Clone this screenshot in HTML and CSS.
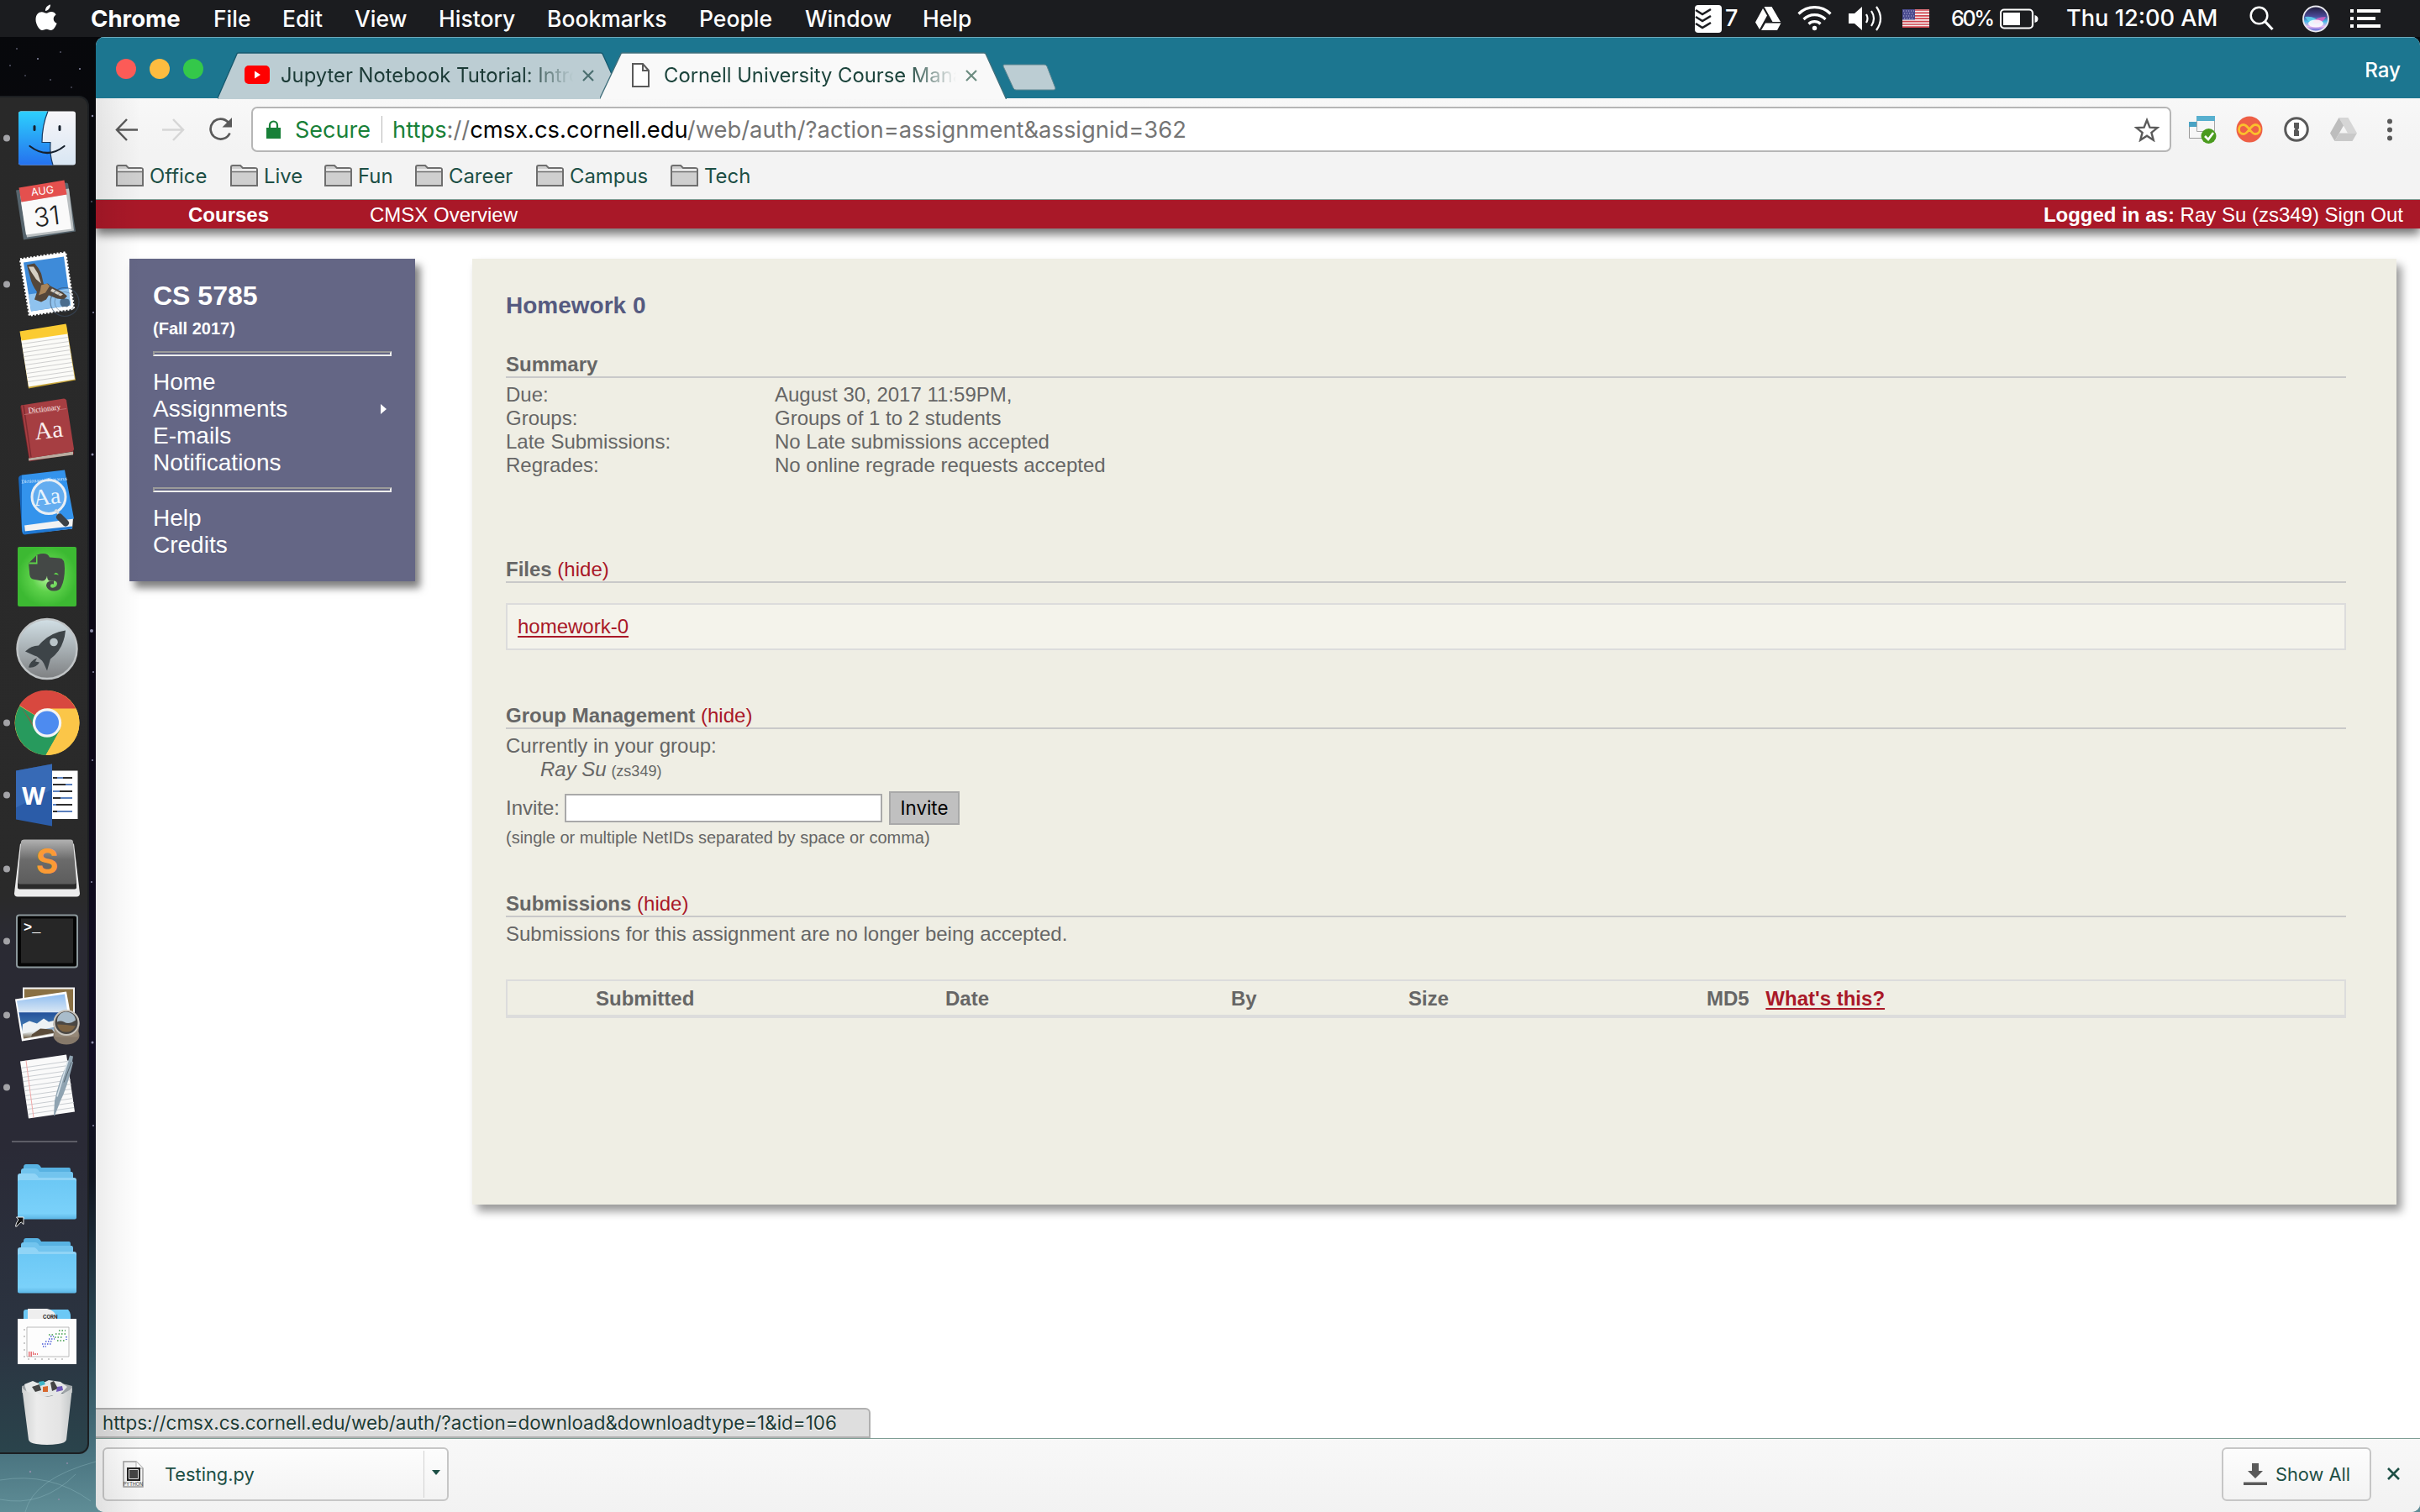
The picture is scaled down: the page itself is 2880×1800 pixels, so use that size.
FILE: index.html
```html
<!DOCTYPE html>
<html lang="en">
<head>
<meta charset="utf-8">
<title>Cornell University Course Management System</title>
<link rel="stylesheet" href="styles.css">
</head>
<body>
<div class="desktop">
  <header class="menubar">
    <nav class="menus">
      <span class="apple"><svg width="28" height="34" viewBox="0 0 28 34"><path fill="#fff" d="M19 0.500c.3 3.500-2.700 7.300-6 7.400C12.600 4.500 15.700 1 19 .5zM25.600 12.400c-4.300 2.700-3.600 8.500 1 10.300-1.300 3.700-4 8.300-7 8.300-2.100 0-2.700-1.300-5.200-1.300S11 31 9.100 31C5.700 31 1.500 23.700 1.500 18.200c0-5.700 3.500-8.900 7.200-8.900 2.300 0 3.900 1.500 5.500 1.500s3.300-1.700 6.200-1.700c1.700 0 3.900 1 5.200 3.300z"/></svg></span>
      <b>Chrome</b><span>File</span><span>Edit</span><span>View</span><span>History</span><span>Bookmarks</span><span>People</span><span>Window</span><span>Help</span>
    </nav>
    <div class="status">
      <svg width="32" height="33" viewBox="0 0 32 33"><rect width="32" height="33" rx="4" fill="#fff"/><path d="M1 6l8 5 10-6M1 14l8 5 10-6M1 22l8 5 10-6" fill="none" stroke="#1b1c20" stroke-width="2.600"/></svg>
      <span class="count">7</span>
      <svg width="31" height="29" viewBox="0 0 31 29" fill="#fff"><path d="M10.500 0h9L30 18h-9.500zM9 2l5 8.500L5 27 0 18.500zM12 19.500h18.500L26 28H7z"/></svg>
      <svg width="41" height="30" viewBox="0 0 41 30" fill="none" stroke="#fff" stroke-width="3.200"><path d="M1.500 9.500a27 27 0 0 1 38 0M7.500 16a18.500 18.500 0 0 1 26 0M13.500 21.500a10 10 0 0 1 14 0"/><circle cx="20.500" cy="26.500" r="2" fill="#fff" stroke-width="1.500"/></svg>
      <svg width="42" height="32" viewBox="0 0 42 32" fill="none" stroke="#fff" stroke-width="2.200"><path fill="#fff" stroke="none" d="M0 10h7l9-8v28l-9-8H0z"/><path d="M21 11q3 5 0 10M27 7q6 9 0 18M33 2q10 14 0 28"/></svg>
      <svg width="32" height="22" viewBox="0 0 32 22"><path fill="#f4f0f0" d="M0 0h32v22H0z"/><path stroke="#d0434d" stroke-width="1.700" d="M0 1h32M0 4.400h32M0 7.800h32M0 11.200h32M0 14.600h32M0 18h32M0 21.200h32"/><path fill="#4a4b8e" d="M0 0h15v12.500H0z"/><path stroke="#b9b9dc" stroke-width="1.200" stroke-dasharray="1.200 1.800" d="M1 2h13M2 5h12M1 8h13M2 11h12"/></svg>
      <span class="pct">60%</span>
      <svg width="46" height="25" viewBox="0 0 46 25"><rect x="1" y="1.500" width="38" height="22" rx="4" fill="none" stroke="#fff" stroke-width="2.200"/><path fill="#fff" d="M4 5h20v15H4zM41.500 8q4 1 4 4.500t-4 4.500z"/></svg>
      <span class="clock">Thu 12:00 AM</span>
      <svg width="29" height="30" viewBox="0 0 29 30" fill="none" stroke="#fff" stroke-width="2.500"><circle cx="11.500" cy="11.500" r="9.800"/><path stroke-width="3.200" d="M18.500 18.500L27.500 28"/></svg>
      <svg width="32" height="33" viewBox="0 0 32 33"><defs><linearGradient id="siri" x1="0" y1="0" x2="0" y2="1"><stop offset="0" stop-color="#1f1b38"/><stop offset=".4" stop-color="#4a4a98"/><stop offset=".6" stop-color="#49b9e8"/><stop offset=".8" stop-color="#e9b7f0"/><stop offset="1" stop-color="#3a5ad0"/></linearGradient></defs><circle cx="16" cy="16.500" r="15" fill="url(#siri)" stroke="#e8e8ee" stroke-width="1.800"/><path fill="#5fd9f2" opacity=".8" d="M3 14q12-2 18 8-12 2-18-8z"/><path fill="#e85ac0" opacity=".8" d="M28 14q-12 0-16 7 10 4 16-7z"/><ellipse cx="16" cy="22" rx="9" ry="4.500" fill="#fff" opacity=".85"/></svg>
      <svg width="36" height="22" viewBox="0 0 36 22"><path stroke="#fff" stroke-width="3.800" d="M0 2h4M8 2h28M0 11h4M8 11h22M0 20h4M8 20h28"/></svg>
    </div>
  </header>

  <div class="workspace">
    <svg class="stars" width="114" height="1756" viewBox="0 44 114 1756">
      <g fill="#8d8da8"><circle cx="20" cy="58" r=".8"/><circle cx="45" cy="70" r="1"/><circle cx="72" cy="62" r=".8"/><circle cx="60" cy="95" r=".8"/><circle cx="95" cy="82" r="1"/><circle cx="30" cy="90" r=".7"/><circle cx="85" cy="104" r=".7"/><circle cx="12" cy="78" r=".8"/><circle cx="110" cy="138" r="1.200"/><circle cx="109" cy="240" r=".8"/><circle cx="111" cy="372" r="1"/><circle cx="110" cy="541" r="1.500"/><circle cx="109" cy="751" r="2"/><circle cx="111" cy="800" r="1"/><circle cx="110" cy="905" r="1"/><circle cx="109" cy="1050" r="1"/><circle cx="110" cy="1241" r="1.500"/><circle cx="111" cy="1340" r="1"/><circle cx="36" cy="1752" r="1.200"/><circle cx="80" cy="1742" r="1"/><circle cx="70" cy="1785" r="1"/></g>
      <g fill="none" stroke="#9cc7cb" opacity=".35"><path d="M0 1762q60-10 108 25M30 1800q10-40 84-60M0 1785q50 10 90-30"/></g>
    </svg>
    <aside class="dock">
      <svg viewBox="0 120.500 106 87">
        <defs><linearGradient id="fb" x1="0" y1="0" x2="0" y2="1"><stop offset="0" stop-color="#2dd0fd"/><stop offset="1" stop-color="#2571ee"/></linearGradient><linearGradient id="fw" x1="0" y1="0" x2="0" y2="1"><stop offset="0" stop-color="#f7f6f9"/><stop offset="1" stop-color="#d9e6f3"/></linearGradient></defs>
        <circle class="dot" cx="8" cy="164" r="4"/>
        <rect x="22" y="132" width="68" height="64" rx="3" fill="url(#fw)"/><path fill="url(#fb)" d="M25 132h32q-7 17-7 37h10q-1 15 3 27H25q-3 0-3-3v-58q0-3 3-3z"/><path fill="none" stroke="#1a3b60" stroke-width="1.200" d="M57 132q-7 17-7 37h10q-1 15 3 27"/><path fill="none" stroke="#16202c" stroke-width="2.200" stroke-linecap="round" d="M35.500 173.500q21 16 41 0"/><path stroke="#16202c" stroke-width="3" stroke-linecap="round" d="M41 150v4M71 150v4"/>
      </svg>
      <svg viewBox="0 207.500 106 87">
        <path fill="#56646d" d="M19 226l60-9 2 1 9 57-62 10z"/><path fill="#b9bec0" d="M24 232l58-8 6 50-56 8z"/><path fill="#fafafa" d="M25 240l54-9 6 41-54 7z"/><path fill="#e4504e" d="M22.500 223l54-9 3 17-54 9z"/>
        <text x="51" y="231" font-size="12.500" fill="#fff" text-anchor="middle" transform="rotate(-7 51 231)">AUG</text><text x="57" y="268" font-size="31" font-weight="300" fill="#222" text-anchor="middle" transform="rotate(-7 57 268)">31</text>
      </svg>
      <svg viewBox="0 294.500 106 87">
        <circle class="dot" cx="8" cy="338" r="4"/>
        <path fill="#fff" stroke="#fff" stroke-width="2.500" stroke-dasharray="2 2" d="M24 308l54-8 10 67-53 8z"/><path fill="#3e8bd9" d="M28 312l48-7 8 58-47 7z"/><path fill="#8fc2ee" d="M34 350l48-7 2 20-47 7z"/>
        <path fill="#54463a" d="M32 315l9-2q5 5 8 12l3 13 5-1 3 3 14 7 6 5-4 4-8-1-10-4-3 5-6 3-8-3 3-9q-6-8-8-17z"/><path fill="#d6cfc4" d="M34 317l6 0 5 8 4 12-6-5-6-9zM62 343l13 7-3 2-12-6z"/><path fill="#a8845a" d="M49 339l7-2 3 3-5 8-8 3 2-6z"/><circle cx="77" cy="359" r="17" fill="none" stroke="#3c4f66" stroke-width="1.200" opacity=".6"/><circle cx="77" cy="359" r="12" fill="none" stroke="#3c4f66" opacity=".4"/><path fill="#3a5876" opacity=".8" d="M72 356q5-2 10 0 3 6-2 9-3-1-6 0-4-4-2-9zM77 354l3-3"/>
      </svg>
      <svg viewBox="0 381.500 106 87">
        <path fill="#c8a63a" d="M24 395l55-9 11 66-56 10z"/><path fill="#fbfbf8" d="M25 403l55-8 9 56-55 9z"/><path fill="#fbcb32" d="M23.500 394l55-9 2 12-55 8z"/><path fill="none" stroke="#c9c9c9" stroke-width=".9" d="M26 409l55-8M27 414l55-8M28 419l55-8M29 424l55-8M30 429l55-8M30 434l55-8M31 439l55-8M32 444l55-8M33 449l55-8M33 454l55-8"/>
      </svg>
      <svg viewBox="0 468.500 106 87">
        <path fill="#6e2429" d="M24 483l3-1 9 62 52-7v3l-53 9z"/><path fill="#b9aca0" d="M34 545l53-8v4l-53 7z"/><path fill="#a63e42" d="M25 482l51-8q2 0 3 2l9 58q0 2-2 3l-51 8z"/><path stroke="#7d2b30" stroke-width="1.500" d="M28 482l9 62"/><path stroke="#cf8a8c" stroke-width=".6" d="M29 493l50-7"/>
        <g fill="#fbeeee" font-family="Liberation Serif, serif" text-anchor="middle"><text x="53" y="489" font-size="9" transform="rotate(-7 53 489)">Dictionary</text><text x="59" y="521" font-size="29" transform="rotate(-7 59 521)">Aa</text></g>
      </svg>
      <svg viewBox="0 555.500 106 87">
        <path fill="#1667bd" d="M22 569q0-3 4-4l7 50-4 21q-3-1-3-6z"/><path fill="#f2f2f2" d="M29 624l58-8-1 13-56 6z"/><path fill="#3393ec" d="M26 565l51-6 11 58-59 8-1 11q-2-4-2-9z"/><path fill="#1f78d4" d="M29 632l57-6v3l-57 7z"/>
        <g fill="#fff" font-family="Liberation Serif, serif" text-anchor="middle"><text x="53" y="573" font-size="6" opacity=".8" transform="rotate(-4 53 573)">Dictionary / Thesaurus</text><text x="57" y="600" font-size="28" transform="rotate(-7 57 600)">Aa</text></g>
        <circle cx="58" cy="591" r="20" fill="#bfe0fa" fill-opacity=".35" stroke="#e8eef4" stroke-width="3"/><path stroke="#d5dade" stroke-width="3" d="M66 606l4 6"/><path stroke="#3c4146" stroke-width="8" stroke-linecap="round" d="M71 615l7 7"/>
      </svg>
      <svg viewBox="0 642.500 106 87">
        <defs><radialGradient id="ev"><stop offset="0" stop-color="#b8f5a0"/><stop offset=".5" stop-color="#5ed24b"/><stop offset="1" stop-color="#3cb932"/></radialGradient></defs>
        <rect x="21" y="650.500" width="70" height="71" rx="2" fill="url(#ev)"/><path fill="#444846" d="M34 670l10-10q12-4 15 3l12 1q6 0 6 12 0 14-4 22-2 5-9 5t-9-6q0-7 9-6v4q-4-1-4 2t4 2q4-1 4-5-1-4-8-3-4 0-4-6-1 6-6 6l-11-2q-4-1-4-9z"/><path fill="#5ed24b" d="M35 669h8v-8l1.500-1v11H34zM64 683q3-4 6 1z"/>
      </svg>
      <svg viewBox="0 729.500 106 87">
        <defs><linearGradient id="lp" x1="0" y1="0" x2="0" y2="1"><stop offset="0" stop-color="#d2e0e6"/><stop offset="1" stop-color="#7e8082"/></linearGradient></defs>
        <circle cx="56" cy="772" r="35.500" fill="url(#lp)" stroke="#c0c4c6" stroke-width="2.500"/><path fill="#3d4448" d="M78 750q-2 22-18 34l-4 14-4-9-2-3-6-5-3-1-11-5q7-7 16-7 12-15 32-18zM44 783l-2 4 5 1q-4 7-13 6 2-8 10-11z"/><circle cx="64" cy="764" r="4.800" fill="#b9c4c9"/>
      </svg>
      <svg viewBox="0 816.500 106 87">
        <circle class="dot" cx="8" cy="860" r="4"/>
        <circle cx="56" cy="860" r="38.500" fill="#fbc648"/><path fill="#d8483f" d="M56 860l-33-21a38.500 38.500 0 0 1 67 4z"/><path fill="#279a5d" d="M56 860L23.500 840a38.500 38.500 0 0 0 31 58.500L72 868z"/><path fill="#fbc648" d="M56 843h34.500A38.500 38.500 0 0 1 54.500 898.500L71 869z"/><path fill="#c43d36" opacity=".55" d="M25 841l17 28-5-12z"/><circle cx="56" cy="860" r="17.200" fill="#f4f4f4"/><circle cx="56" cy="860" r="14" fill="#4d8bf0"/>
      </svg>
      <svg viewBox="0 903.500 106 87">
        <circle class="dot" cx="8" cy="946" r="4"/>
        <path fill="#fff" d="M60 917h32.500v57.500H60z"/><path stroke="#2e2e2e" stroke-width="2" d="M63 925.500h23M63 933.500h23M63 941.500h23M63 949.500h23M63 957.500h23M63 965.500h23"/><path stroke="#5a80bd" stroke-width="2" d="M68 925.500h7M78 933.500h8M63 941.500h8M72 949.500h14M63 957.500h4M68 965.500h18"/><path fill="#2b5ca8" d="M19 917l43-8v74l-43-8z"/><path fill="#3f73bf" opacity=".6" d="M19 917l43-8v30l-43 22z"/><text x="40" y="957" text-anchor="middle" font-size="28" font-weight="700" fill="#fff">W</text>
      </svg>
      <svg viewBox="0 990.500 106 87">
        <defs><linearGradient id="su" x1="0" y1="0" x2="0" y2="1"><stop offset="0" stop-color="#b2b2b2"/><stop offset=".45" stop-color="#6b6b6b"/><stop offset="1" stop-color="#5d5d5d"/></linearGradient></defs>
        <circle class="dot" cx="8" cy="1034" r="4"/>
        <path fill="#ececec" d="M24 1004h64l7 59q0 4-4 4H21q-4 0-4-4z"/><path fill="#2b2b2b" d="M21 1048h70v8q0 2-3 2H24q-3 0-3-2z"/><path fill="url(#su)" d="M29 999h55q3 0 3 3l4 47q0 3-3 3H24q-3 0-3-3l4-47q0-3 4-3z"/><text x="56" y="1039" text-anchor="middle" font-size="41" font-weight="700" fill="#fb9a35">S</text>
      </svg>
      <svg viewBox="0 1077.500 106 87">
        <circle class="dot" cx="8" cy="1120" r="4"/>
        <rect x="20" y="1089" width="72" height="62" rx="3" fill="#050505" stroke="#8c989c" stroke-width="2"/><path fill="#262626" d="M25 1093h62v53H25z"/><text x="28" y="1108" font-size="17" font-weight="700" fill="#fff" font-family="Liberation Mono, monospace">&gt;_</text>
      </svg>
      <svg viewBox="0 1164.500 106 87">
        <defs><linearGradient id="sea" x1="0" y1="0" x2="0" y2="1"><stop offset="0" stop-color="#8fbdf0"/><stop offset=".4" stop-color="#d7e6f4"/><stop offset=".42" stop-color="#24529a"/><stop offset=".7" stop-color="#3f76b0"/><stop offset=".85" stop-color="#e2e8ea"/><stop offset="1" stop-color="#6b5a40"/></linearGradient></defs>
        <circle class="dot" cx="8" cy="1208" r="4"/>
        <path fill="#f5f5f5" d="M27 1175h62v46H27z"/><path fill="#8a7043" d="M29 1177h58v42H29z"/><path fill="#fff" d="M18 1189l61-9 9 49-62 10z"/><path fill="url(#sea)" d="M20 1191l57-8 7 44-56 9z"/><path fill="#eef2f4" d="M27 1219l8-4 9 3 8-6 6 4 8-2v8l-39 8z"/><path fill="#5b4c3a" d="M38 1231l10-7 14 1 3 4-28 5z"/><ellipse cx="79" cy="1232" rx="15.500" ry="11" fill="#86796a"/><circle cx="79" cy="1218" r="15.500" fill="#b9b4ad"/><path fill="#958878" d="M63.500 1218h31l-2 16h-27z"/><circle cx="79" cy="1217" r="14.500" fill="#4a4744" stroke="#c9c5be" stroke-width="2"/><path fill="#a9bccb" d="M68 1216a11 11 0 0 1 22-2q-8 6-14 2-4-2-8 0z"/><path fill="#7c6242" d="M68 1219q10 0 22 2-5 8-12 7-8 0-10-9z"/>
      </svg>
      <svg viewBox="0 1251.500 106 87">
        <circle class="dot" cx="8" cy="1294" r="4"/>
        <path fill="#fafafa" d="M24 1263l55-8 10 68-55 8z"/><path fill="none" stroke="#c3c7cc" stroke-width=".9" d="M25 1271l55-8M26 1276l55-8M27 1282l55-8M28 1287l55-8M29 1293l55-8M30 1298l55-8M30 1304l55-8M31 1309l55-8M32 1315l55-8M33 1320l55-8M33 1326l55-8"/><path stroke="#f0a9a9" d="M31 1262l9 68"/><path fill="#8fa3b1" d="M83 1256l4 1-1 6 1 1q-7 30-15 46l-7 18-1-1 1-17q5-24 15-44z"/><path stroke="#d7e2ea" stroke-width="1.500" d="M81 1262l-13 43"/><path stroke="#56646f" d="M85 1264l-9 24"/>
      </svg>
      <div class="separator"></div>
      <svg viewBox="0 1376 106 87">
        <defs><linearGradient id="fo" x1="0" y1="0" x2="0" y2="1"><stop offset="0" stop-color="#6cc8f5"/><stop offset=".85" stop-color="#7ad1fa"/><stop offset="1" stop-color="#5bb5e4"/></linearGradient></defs>
        <g id="folder"><path fill="#58b2e2" d="M28 1390q0-4 3-4h13q3 0 5 4h33q2 0 2 3v10H28z"/><path fill="#72c4ee" d="M25 1394q0-3 3-3h14q3 0 5 4h38q2 0 2 3v10H25z"/><path fill="#90d4f6" d="M21 1400q0-3 3-3h16q3 0 6 5h42q3 0 3 3v20H21z"/><rect x="21" y="1405" width="70" height="46.500" rx="2" fill="url(#fo)"/></g>
        <path fill="#111" stroke="#f2f2f2" stroke-width="1" d="M19.500 1449h8.500v8.500l-2.800-2.600q-3 2-5.200 5.100h-1.500q.3-4 3.500-8z"/>
      </svg>
      <svg viewBox="0 1463 106 87"><use href="#folder" transform="translate(0 88)"/></svg>
      <svg viewBox="0 1550 106 87">
        <path fill="#6cc8f5" d="M28 1562q0-3 3-3h50q3 3 3 8v6H28z"/><path fill="#eee" d="M33 1558h23q9 1 13 13H33z"/><text x="51" y="1570" font-size="6" font-weight="700" fill="#222">CORN</text>
        <path fill="#fdfdfd" d="M21 1570h70v54H21z"/><path fill="none" stroke="#aaa" stroke-width=".8" d="M32 1580h50v35H32z"/><path stroke="#e0444a" stroke-width="1.500" stroke-dasharray="1.500 1" d="M34 1610h6M34 1612h11M34 1614h5"/><path stroke="#4a5ad8" stroke-width="1.500" stroke-dasharray="1.500 1.500" d="M50 1600h6M51 1603h4M54 1597h8M56 1600h5M58 1594h7M60 1591h4M79 1591v4"/><path stroke="#3c9a48" stroke-width="1.500" stroke-dasharray="1.500 2" d="M58 1589h5M65 1592h9M66 1588h14M68 1596h9M70 1584h8"/><path stroke="#999" stroke-dasharray="2 6" d="M33 1618h48M29 1582v34"/>
      </svg>
      <svg viewBox="0 1637 106 87">
        <defs><linearGradient id="tr"><stop offset="0" stop-color="#d0d2d2"/><stop offset=".3" stop-color="#ececec"/><stop offset=".75" stop-color="#e4e4e4"/><stop offset="1" stop-color="#c4c8c9"/></linearGradient></defs>
        <path fill="#9da3a6" d="M26 1650q30-9 60 0v8H26z"/><path fill="#e4e6e6" d="M29 1648l10-4 9 4 10-5 14 2 8 6-8 9-20 3-20-5z"/><path fill="#444" d="M38 1651l9-3 2 7-7 2zM60 1646l4-2 5 9-7 3z"/><path fill="#3fb6c9" d="M46 1645l6-1 2 4-6 2z"/><path fill="#d8682e" d="M51 1651l6-1v7h-6z"/><path fill="#6e57b8" d="M68 1651l6-1 1 5-8 2z"/>
        <path fill="url(#tr)" d="M26 1651q4 8 18 7 10 8 22 2 14-1 20-8l-7 62q-1 4-10 5-13 2-26 0-8-1-9-5z"/>
      </svg>
    </aside>

    <main class="window">
      <div class="titlebar">
        <div class="lights"><i class="red"></i><i class="yellow"></i><i class="green"></i></div>
        <div class="tab back">
          <svg class="shape" width="482" height="56" viewBox="0 0 482 56"><path fill="#bccdd3" stroke="#175a6f" stroke-width="1.300" d="M-1 57L23 2q0-1 2-1h431q1 0 2 1l25 55"/></svg>
          <svg class="yt" width="30" height="23" viewBox="0 0 30 23"><rect width="30" height="22" rx="5" fill="#f00"/><path fill="#fff" d="M12 6.500l7 4.500-7 4.500z"/></svg>
          <span class="title">Jupyter Notebook Tutorial: Introduction</span>
          <svg width="14" height="14" viewBox="0 0 14 14"><path stroke="#4c6f70" stroke-width="2.200" d="M1 1l12 12M13 1L1 13"/></svg>
        </div>
        <div class="tab front">
          <svg class="shape" width="484" height="56" viewBox="0 0 484 56"><path fill="#f9f9f9" stroke="#42707c" stroke-width="1.300" d="M-1 57L25 2q0-1 2-1h430q1 0 2 1l25 55"/></svg>
          <svg class="doc" width="21" height="29" viewBox="0 0 21 29" fill="#fff" stroke="#5a5a5a" stroke-width="2"><path d="M1 1h12l7 8v19H1zM13 1v8h7"/></svg>
          <span class="title">Cornell University Course Management</span>
          <svg width="14" height="14" viewBox="0 0 14 14"><path stroke="#6c8c80" stroke-width="2.200" d="M1 1l12 12M13 1L1 13"/></svg>
        </div>
        <svg class="newtab" width="64" height="32" viewBox="0 0 64 32"><path fill="#bccdd3" stroke="#5d8590" stroke-width="1" d="M2 1h48q2 0 3 2l10 26q0 2-2 2H16q-2 0-3-2L1 3Q.5 1 2 1z"/></svg>
        <span class="profile">Ray</span>
      </div>

      <div class="toolbar">
        <svg class="backbtn" width="27" height="27" viewBox="0 0 27 27" fill="none" stroke="#5a5a5a" stroke-width="2.500"><path d="M14 1L2 13.500 14 26M2 13.500h25"/></svg>
        <svg class="fwd" width="27" height="27" viewBox="0 0 27 27" fill="none" stroke="#d6d6d6" stroke-width="2.500"><path d="M13 1l12 12.500L13 26M25 13.500H0"/></svg>
        <svg class="reload" width="28" height="28" viewBox="0 0 28 28"><path fill="none" stroke="#5a5a5a" stroke-width="2.700" d="M24.500 18.500A12 12 0 1 1 22.500 5.500"/><path fill="#5a5a5a" d="M27 0v11.500h-11.500z"/></svg>
        <div class="omnibox">
          <svg width="17" height="23" viewBox="0 0 17 23"><path fill="#188038" d="M0 9h17v13H0z"/><path fill="none" stroke="#188038" stroke-width="2.200" d="M4 10V6a4.500 4.500 0 0 1 9 0v4"/></svg>
          <span class="secure">Secure</span><i class="bar"></i>
          <span class="url"><em>https</em>://<b>cmsx.cs.cornell.edu</b>/web/auth/?action=assignment&amp;assignid=362</span>
          <svg class="star" width="30" height="29" viewBox="0 0 30 29"><path fill="none" stroke="#5a5a5a" stroke-width="2.400" d="M15 3l3.400 8.600 9.100.5-7.100 5.800 2.400 8.900-7.800-5-7.800 5 2.400-8.900-7.100-5.800 9.100-.5z"/></svg>
        </div>
        <div class="exts">
          <svg width="33" height="33" viewBox="0 0 33 33"><path fill="#f7f7f7" stroke="#9a9a9a" d="M.5 7.500h20v19H.5z"/><path fill="#4aa3c4" d="M0 7h21v6H0z"/><path fill="#f7f7f7" stroke="#a5a5a5" d="M9.500.5h21v18h-21z"/><path fill="#58b0cf" d="M9 0h22v6H9z"/><circle cx="23.500" cy="24" r="9" fill="#4b9b1f"/><path fill="none" stroke="#fff" stroke-width="2.600" d="M19 24l4 4 6-8"/></svg>
          <svg width="32" height="32" viewBox="0 0 32 32"><circle cx="16" cy="16" r="15.500" fill="#ee5f46"/><path fill="none" stroke="#fbc02d" stroke-width="2.800" d="M16 16c-3-4-5-5.500-7-5.500a5.500 5.500 0 0 0 0 11c2 0 4-1.500 7-5.500s5-5.500 7-5.500a5.500 5.500 0 0 1 0 11c-2 0-4-1.500-7-5.500z"/></svg>
          <svg width="30" height="30" viewBox="0 0 30 30"><circle cx="15" cy="15" r="13.300" fill="#fff" stroke="#5a5a5a" stroke-width="3"/><path fill="#5a5a5a" d="M12 7h6v7l-1.500 1.500L18 17v6h-6v-7l1.500-1.500L12 13z"/></svg>
          <svg width="32" height="29" viewBox="0 0 32 29"><path fill="#d6d6d6" d="M10.500 0h11L32 18.500h-11z"/><path fill="#bdbdbd" d="M10.500 0l5.500 9.500L5.500 28 0 18.500z"/><path fill="#c9c9c9" d="M11 18.500h21L26.500 28h-21z"/></svg>
          <svg width="6" height="27" viewBox="0 0 6 27" fill="#5a5a5a"><circle cx="3" cy="3.500" r="3"/><circle cx="3" cy="13.500" r="3"/><circle cx="3" cy="23.500" r="3"/></svg>
        </div>
      </div>

      <svg class="defs" width="0" height="0"><symbol id="bm" viewBox="0 0 33 26"><path fill="#cfcfcf" stroke="#6f6f6f" stroke-width="2" d="M1 3q0-2 2-2h9l3 3h14q3 0 3 2v19H1z"/><path fill="#ececec" d="M2 5h29v3H2z"/><path stroke="#6f6f6f" stroke-width="1.600" d="M1 8.500h31"/></symbol></svg>
      <nav class="bookmarks">
        <a><svg><use href="#bm"/></svg>Office</a><a><svg><use href="#bm"/></svg>Live</a><a><svg><use href="#bm"/></svg>Fun</a><a><svg><use href="#bm"/></svg>Career</a><a><svg><use href="#bm"/></svg>Campus</a><a><svg><use href="#bm"/></svg>Tech</a>
      </nav>

      <div class="page">
        <div class="sitebar"><b>Courses</b><span>CMSX Overview</span><span class="who"><b>Logged in as:</b> Ray Su (zs349) Sign Out</span></div>
        <div class="columns">
          <aside class="sidebar">
            <h1>CS 5785</h1>
            <h2>(Fall 2017)</h2>
            <div class="rule first"></div>
            <ul><li>Home</li><li class="more">Assignments<svg width="8" height="12" viewBox="0 0 8 12"><path fill="#fff" d="M1 0l7 6-7 6z"/></svg></li><li>E-mails</li><li>Notifications</li></ul>
            <div class="rule"></div>
            <ul><li>Help</li><li>Credits</li></ul>
          </aside>
          <section class="content">
            <h1>Homework 0</h1>
            <h2>Summary</h2>
            <dl><dt>Due:</dt><dd>August 30, 2017 11:59PM,</dd><dt>Groups:</dt><dd>Groups of 1 to 2 students</dd><dt>Late Submissions:</dt><dd>No Late submissions accepted</dd><dt>Regrades:</dt><dd>No online regrade requests accepted</dd></dl>
            <h2 class="files">Files <a>(hide)</a></h2>
            <div class="filebox"><a>homework-0</a></div>
            <h2 class="group">Group Management <a>(hide)</a></h2>
            <p>Currently in your group:</p>
            <p class="member"><i>Ray Su</i> <small>(zs349)</small></p>
            <div class="invite"><label>Invite:</label><input type="text"><button>Invite</button></div>
            <p class="hint">(single or multiple NetIDs separated by space or comma)</p>
            <h2 class="subs">Submissions <a>(hide)</a></h2>
            <p>Submissions for this assignment are no longer being accepted.</p>
            <div class="table"><span>Submitted</span><span>Date</span><span>By</span><span>Size</span><span>MD5 <a>What's this?</a></span></div>
          </section>
        </div>
        <div class="bubble">https://cmsx.cs.cornell.edu/web/auth/?action=download&amp;downloadtype=1&amp;id=106</div>
      </div>

      <footer class="shelf">
        <div class="download">
          <svg width="25" height="32" viewBox="0 0 25 32"><path fill="#f4f4f4" stroke="#9a9a9a" stroke-width="1.500" d="M1 1h15l8 8v22H1z"/><path fill="#fff" stroke="#aaa" d="M16 1v8h8"/><path fill="#222" d="M5 8h16v16H5z"/><path fill="#444" stroke="#ddd" d="M7.500 10.500h11v11h-11z"/><text x="12.500" y="29.500" font-size="5.500" text-anchor="middle" fill="#444">PYTHON</text></svg>
          <span>Testing.py</span>
          <i class="menu"><svg width="10" height="6" viewBox="0 0 10 6"><path fill="#1d4f45" d="M0 0h10L5 6z"/></svg></i>
        </div>
        <div class="showall"><svg width="28" height="26" viewBox="0 0 28 26" fill="#5a5a5a"><path d="M10 0h8v9h5l-9 9-9-9h5zM0 22.500h28V26H0z"/></svg>Show All</div>
        <svg width="15" height="15" viewBox="0 0 15 15"><path stroke="#1d4f45" stroke-width="2.600" d="M1 1l13 13M14 1L1 14"/></svg>
      </footer>
    </main>
  </div>
</div>
</body>
</html>
```
FILE: styles.css
```css
* { box-sizing: border-box; }
body { margin: 0; }
h1, h2, p, ul, dl, dd { margin: 0; padding: 0; }
ul { list-style: none; }
svg { display: block; flex: none; }

.desktop {
  width: 2880px; height: 1800px; overflow: hidden;
  display: flex; flex-direction: column;
  font-family: Inter, sans-serif;
  background: linear-gradient(#07080b 0, #08080d 300px, #0d0818 900px, #120e24 1250px, #10141f 1400px, #2c4a57 1600px, #4a7480 1730px, #5f8d96 1800px);
}

/* macOS menu bar */
.menubar { height: 44px; flex: none; display: flex; justify-content: space-between; background: #1b1c1f; color: #fff; line-height: 44px; font-size: 26.500px; font-weight: 500; }
.menus { display: grid; grid-template-columns: 108px 146px 82px 86px 100px 129px 181px 126px 140px 80px; white-space: nowrap; }
.menus b { font-size: 27.600px; font-weight: 700; }
.apple { padding: 5px 0 0 41px; }
.status { width: 863px; display: grid; grid-template-columns: 36px 36px 50px 61px 64px 58px 58px 79px 218px 63px 57px 1fr; align-items: center; white-space: nowrap; font-weight: 450; }
.count { font-size: 27px; }
.pct { font-size: 25px; letter-spacing: -2.300px; }
.clock { font-size: 27.200px; }

.workspace { flex: 1; display: flex; position: relative; }
.stars { position: absolute; left: 0; top: 0; }

/* Dock */
.dock {
  position: relative; width: 106px; height: 1617px; margin: 70px 8px 0 0; flex: none; padding-top: 4.500px;
  border: solid #1c1f22; border-width: 2px 2px 2px 0; border-radius: 0 12px 12px 0;
  background: linear-gradient(#292929, #2a2a2a 950px, #2a2a33 1000px, #2a2a36 1250px, #2b3441 1480px, #2a444c 1616px);
}
.dock svg { width: 106px; height: 87px; font-family: Inter, sans-serif; }
.dot { fill: #a3a3a7; }
.separator { height: 37.500px; padding: 19.500px 0 0 14px; }
.separator::before { content: ""; display: block; width: 78px; height: 2px; background: #5d5d66; }

/* Browser window */
.window { position: relative; flex: 1; display: flex; flex-direction: column; border-radius: 10px; overflow: hidden; background: #f3f3f3; }
.window::after { content: ""; position: absolute; left: 0; top: 73px; bottom: 0; width: 54px; background: linear-gradient(90deg, rgba(0,0,0,.075), rgba(0,0,0,.03) 50%, transparent); }

.titlebar { height: 73px; flex: none; display: flex; align-items: flex-end; background: #1c7690; border-top: 1px solid #6caabb; }
.lights { width: 145px; height: 72px; padding: 25px 0 0 24px; display: flex; gap: 16px; }
.lights i { width: 24px; height: 24px; border-radius: 50%; }
.red { background: #fc5b57; }
.yellow { background: #fdbc40; }
.green { background: #34c84a; }
.tab { position: relative; height: 55px; display: flex; align-items: center; font-size: 23.800px; color: #1b3a36; white-space: nowrap; }
.tab > * { position: relative; }
.tab .shape { position: absolute; left: 0; top: 0; }
.tab.back { width: 455px; padding-left: 32px; }
.tab.front { width: 479px; padding-left: 38px; color: #1c443c; }
.title { width: 348px; overflow: hidden; -webkit-mask-image: linear-gradient(90deg, #000 290px, transparent 348px); mask-image: linear-gradient(90deg, #000 290px, transparent 348px); }
.yt { margin-right: 13px; }
.doc { margin-right: 17px; }
.title + svg { margin-left: 11px; }
.newtab { margin-bottom: 9px; }
.profile { margin: 0 23px 0 auto; line-height: 30px; padding-bottom: 18px; font-size: 24.200px; font-weight: 500; color: #fff; }

.toolbar { height: 64px; flex: none; padding-top: 10px; display: flex; align-items: center; background: linear-gradient(#f8f8f8, #f3f3f3); }
.backbtn { margin-left: 23px; }
.fwd { margin-left: 29px; }
.reload { margin: 0 22px 0 29px; }
.omnibox { width: 2285px; height: 54px; flex: none; display: flex; align-items: center; padding: 0 12px 0 16px; background: #fff; border: 2px solid #b6b6b6; border-radius: 7px; font-size: 27.350px; white-space: nowrap; color: #757575; }
.secure { width: 103px; margin-left: 17px; font-size: 27px; color: #188038; }
.bar { width: 1px; height: 32px; margin-right: 12px; background: #b8b8b8; }
.url em { font-style: normal; color: #188038; }
.url b { font-weight: 400; color: #000; }
.star { margin-left: auto; }
.exts { flex: 1; display: grid; grid-template-columns: 56px 57px 55px 68px 1fr; align-items: center; padding-left: 21px; }

.defs { position: absolute; }
.bookmarks { height: 56px; flex: none; display: grid; grid-template-columns: 136px 112px 108px 144px 160px 120px; padding-left: 24px; align-items: center; font-size: 23.900px; color: #1d4f45; }
.bookmarks a { display: flex; align-items: center; gap: 7px; }
.bookmarks svg { width: 33px; height: 26px; }

/* Course page */
.page { position: relative; flex: 1; overflow: hidden; border-top: 1px solid #7f9e95; background: #fff; font: 24px/28px "Liberation Sans", Arial, sans-serif; color: #666; }
.sitebar { height: 34px; display: flex; line-height: 36px; background: #a91828; color: #fff; padding: 0 20px 0 110px; box-shadow: 0 7px 12px rgba(0,0,0,.55); }
.sitebar > b { width: 216px; }
.who { margin-left: auto; }
.columns { display: flex; align-items: flex-start; gap: 68px; padding: 36px 28px 0 40px; }
.sidebar { width: 340px; height: 384px; flex: none; padding: 26px 28px; background: #646685; color: #fff; box-shadow: 6px 8px 9px rgba(0,0,0,.5); font-size: 28px; line-height: 32px; }
.sidebar h1 { font-size: 32px; line-height: 36px; }
.sidebar h2 { margin-top: 9px; font-size: 20px; line-height: 24px; }
.sidebar ul { padding-top: 1px; margin-bottom: -1px; }
.rule { height: 6px; margin: 14px 0; border: 2px solid; border-color: #9a9a9a #eee #eee #9a9a9a; }
.rule.first { margin-top: 15px; }
.more { display: flex; justify-content: space-between; align-items: center; padding-right: 6px; }

.content { flex: 1; height: 1126px; padding: 40px 60px 0 40px; background: #efeee4; box-shadow: 6px 8px 10px rgba(0,0,0,.4); }
.content h1 { font-size: 28px; line-height: 32px; padding-bottom: 40px; color: #555a80; }
.content h2 { height: 30px; font-size: 24px; line-height: 28px; border-bottom: 2px solid #c9c9c9; margin-bottom: 6px; }
.content a { color: #a91828; }
.content h2 a { font-weight: 400; }
.content dl { display: grid; grid-template-columns: 320px 1fr; }
.content .files { margin-top: 96px; margin-bottom: 24px; }
.filebox { height: 56px; border: 2px solid #dcdcdc; background: #f4f3eb; padding: 12px; }
.filebox a, .table a { text-decoration: underline; text-decoration-thickness: 2px; text-underline-offset: 3px; }
.content .group { margin-top: 64px; }
.member { height: 28px; padding-left: 41px; }
.member small { font-size: 18px; line-height: 0; margin-left: -1px; }
.invite { height: 42px; margin-top: 11px; display: flex; align-items: center; }
.invite label { width: 70px; }
.invite input { width: 378px; height: 34px; margin: 0; padding: 0; border: 2px solid #a9a9a9; background: #fff; }
.invite button { width: 84px; height: 40px; margin-left: 8px; padding: 0; border: 2px solid #a9a9a9; background: #c0c0c0; font: 400 22.300px/36px Inter, sans-serif; color: #000; }
.content .hint { font-size: 20px; line-height: 24px; margin-top: 2px; }
.content .subs { margin-top: 53px; }
.table { height: 46px; margin-top: 40px; padding: 7px 0 0 105px; border: 2px solid #dcdcdc; border-bottom-width: 4px; display: grid; grid-template-columns: 416px 340px 211px 355px 1fr; font-weight: 700; }
.table a { margin-left: 13px; }

.bubble { position: absolute; left: 0; bottom: 0; width: 922px; height: 36px; padding-left: 8px; background: #dedede; border: 2px solid #b0b0b0; border-left-width: 0; border-top-right-radius: 6px; font: 22.450px/32px Inter, sans-serif; color: #1b3a34; white-space: nowrap; text-shadow: 0 1px #fff; }

/* Downloads shelf */
.shelf { height: 88px; flex: none; display: flex; align-items: center; border-top: 1px solid #7f9e95; padding: 0 24px 4px 8px; font-size: 21.800px; color: #1d4f45; background: linear-gradient(#f8f8f8, #f2f2f2); }
.download, .showall { height: 64px; display: flex; align-items: center; border: 2px solid #c6c6c6; border-radius: 6px; background: linear-gradient(#fdfdfd, #f3f3f3); }
.download { width: 412px; padding-left: 22px; }
.download span { margin-left: 25px; }
.menu { margin-left: auto; width: 28px; height: 56px; display: flex; align-items: center; justify-content: center; padding-bottom: 4px; border-left: 1px solid #d2d2d2; }
.showall { width: 178px; margin: 0 19px 0 auto; padding-left: 24px; gap: 10px; }
```
